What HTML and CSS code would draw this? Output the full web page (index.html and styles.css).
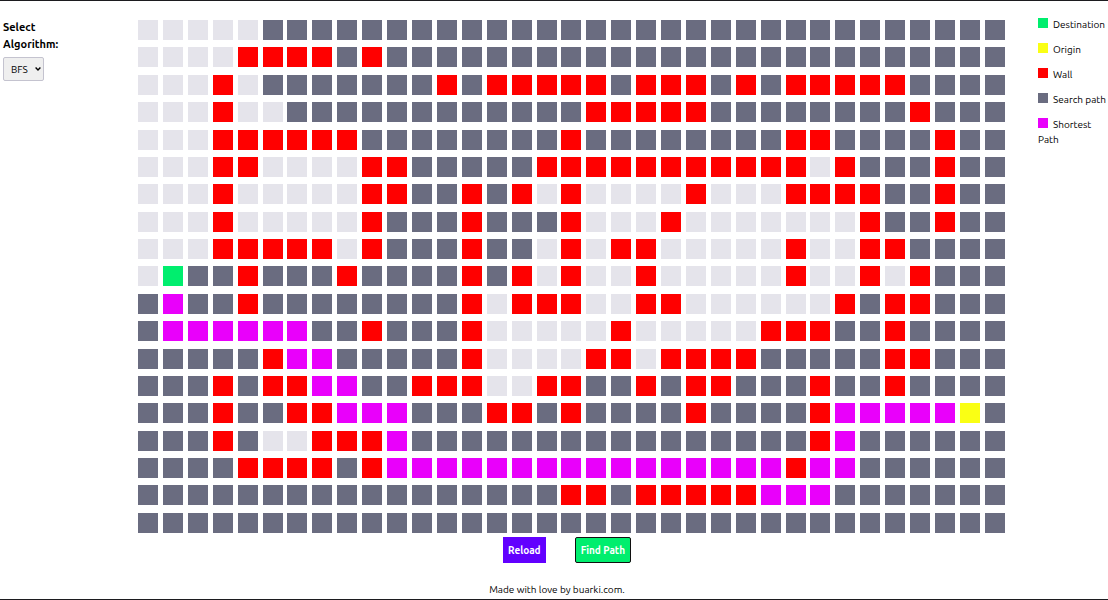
FILE: index.html
```html
<!DOCTYPE html>
<html lang="en">
<head>
<meta charset="utf-8">
<title>Path Finder</title>
<link rel="stylesheet" href="styles.css">
</head>
<body>
<div class="page">
  <div class="workspace">
    <aside class="sidebar">
      <label class="algorithm-label" for="algorithm">Select Algorithm:</label>
      <div class="picker">
        <select class="algorithm" id="algorithm">
          <option>BFS</option>
          <option>DFS</option>
        </select>
        <svg class="chevron" width="6" height="4" viewBox="0 0 6 4" aria-hidden="true"><path d="M0.6 0.6 3 3 5.4 0.6" fill="none" stroke="#000" stroke-width="1.4"/></svg>
      </div>
    </aside>
    <main class="board">
      <div class="grid" id="grid"></div>
      <div class="actions">
        <button class="button reload" type="button">Reload</button>
        <button class="button find" type="button">Find Path</button>
      </div>
    </main>
    <ul class="legend">
      <li><span class="swatch destination"></span>Destination</li>
      <li><span class="swatch origin"></span>Origin</li>
      <li><span class="swatch wall"></span>Wall</li>
      <li><span class="swatch searched"></span>Search path</li>
      <li><span class="swatch path"></span>Shortest Path</li>
    </ul>
  </div>
  <footer class="footer">Made with love by buarki.com.</footer>
</div>
<script src="grid.js"></script>
</body>
</html>
```
FILE: styles.css
```css
* {
  box-sizing: border-box;
}

body {
  margin: 0;
  background: #fff;
  color: #000;
  font-family: Ubuntu, "Noto Sans", sans-serif;
  font-size: 10px;
  line-height: 15px;
}

.page {
  display: flex;
  flex-direction: column;
  min-height: 100vh;
  border-top: 1px solid #1c1b1f;
  border-bottom: 1px solid #1c1b1f;
}

.workspace {
  display: grid;
  grid-template-columns: 135px 1fr 70px;
  padding: 16px 0 0 3px;
}

.sidebar {
  display: flex;
  flex-direction: column;
  align-items: flex-start;
  gap: 4px;
  padding-top: 2px;
}

.algorithm-label {
  width: 70px;
  font-size: 11px;
  font-weight: bold;
  line-height: 17px;
}

.picker {
  position: relative;
}

.algorithm {
  appearance: none;
  display: block;
  width: 41px;
  height: 24px;
  padding: 0 0 0 7px;
  border: 1px solid #c4c3cf;
  border-radius: 2px;
  background: #efefef;
  color: #000;
  font: inherit;
}

.chevron {
  position: absolute;
  top: 10px;
  right: 3px;
  pointer-events: none;
}

.board {
  padding: 3px 33px 0 0;
}

.grid {
  display: flex;
  flex-direction: column;
  justify-content: space-between;
  height: 513px;
}

.row {
  display: flex;
  justify-content: space-between;
}

.cell {
  width: 20px;
  height: 20px;
}

.unvisited { background: #e5e4eb; }
.searched { background: #6a6c80; }
.wall { background: #ff0000; }
.path { background: #e900fb; }
.destination { background: #00ee6e; }
.origin { background: #faff14; }

.actions {
  display: flex;
  justify-content: center;
  gap: 29px;
  padding: 4px 9px 0 0;
}

.button {
  height: 26px;
  padding: 0 5px;
  border: 0;
  color: #fff;
  font: inherit;
  font-weight: bold;
}

.reload {
  background: #6200ff;
}

.find {
  border: 1px solid #101010;
  border-radius: 2px;
  background: #00ee6e;
}

.legend {
  display: flex;
  flex-direction: column;
  gap: 10px;
  margin: 0;
  padding: 0;
  list-style: none;
}

.swatch {
  display: inline-block;
  width: 10px;
  height: 10px;
  margin-right: 5px;
}

.footer {
  margin-top: auto;
  padding: 0 0 2px 6px;
  text-align: center;
}
```
FILE: grid.js
```js
const kinds = {
  ".": "unvisited",
  "s": "searched",
  "#": "wall",
  "p": "path",
  "D": "destination",
  "O": "origin"
};

const rows = [
  ".....ssssssssssssssssssssssssssssss",
  "....####s#sssssssssssssssssssssssss",
  "...#.sssssss#s#####s###s#s#####ssss",
  "...#..ssssssssssss#####ssssssss#sss",
  "...######ssssssss#ssssssss##ssss#ss",
  "...##....##sssss###########.#sss#ss",
  "...#.....##ss#s#.#....#...####ss#ss",
  "...#.....#sss#sss#...#.......#ss#ss",
  "...#####.#sss#ss.#.##.....#..##ssss",
  ".Dss#sss#ssss#s#.#..#.....#..#.#sss",
  "spss#ssssssss#.###..##......#s##sss",
  "sppppppss#sss#.....#.....###ss#ssss",
  "sssss#ppsssss#....##.####sssss##sss",
  "sss#s##ppss###..##ss#s##sss#ss#ssss",
  "sss#ss##pppsss##s#ssss#ssss#pppppOs",
  "sss#s..###pssssssssssssssss#pssssss",
  "ssss####s#pppppppppppppppp#ppssssss",
  "sssssssssssssssss##s#####pppsssssss",
  "sssssssssssssssssssssssssssssssssss"
];

const grid = document.getElementById("grid");

for (const line of rows) {
  const row = document.createElement("div");
  row.className = "row";
  for (const mark of line) {
    const cell = document.createElement("div");
    cell.className = "cell " + kinds[mark];
    row.append(cell);
  }
  grid.append(row);
}
```
